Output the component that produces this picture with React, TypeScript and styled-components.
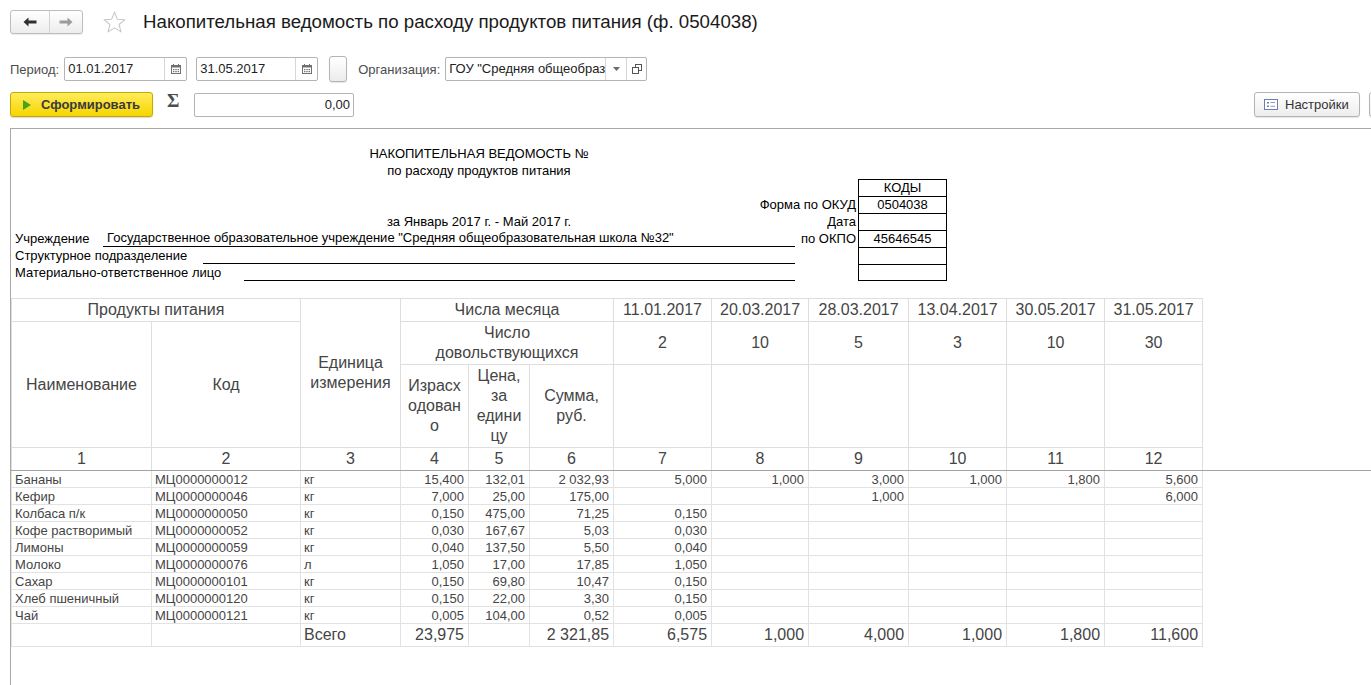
import React from "react";
import styled, { createGlobalStyle } from "styled-components";

const GlobalStyle = createGlobalStyle`
  html, body {
    margin: 0;
    padding: 0;
    background: #fff;
    overflow: hidden;
  }
  body {
    font-family: "Liberation Sans", Arial, sans-serif;
    font-size: 13px;
    color: #333;
  }
  * {
    box-sizing: border-box;
  }
`;

const colWidths = [140, 149, 100, 68, 61, 84, 98, 97, 100, 98, 98, 98];

const dates = ["11.01.2017", "20.03.2017", "28.03.2017", "13.04.2017", "30.05.2017", "31.05.2017"];
const eaters = ["2", "10", "5", "3", "10", "30"];

const rows: string[][] = [
  ["Бананы", "МЦ0000000012", "кг", "15,400", "132,01", "2 032,93", "5,000", "1,000", "3,000", "1,000", "1,800", "5,600"],
  ["Кефир", "МЦ0000000046", "кг", "7,000", "25,00", "175,00", "", "", "1,000", "", "", "6,000"],
  ["Колбаса п/к", "МЦ0000000050", "кг", "0,150", "475,00", "71,25", "0,150", "", "", "", "", ""],
  ["Кофе растворимый", "МЦ0000000052", "кг", "0,030", "167,67", "5,03", "0,030", "", "", "", "", ""],
  ["Лимоны", "МЦ0000000059", "кг", "0,040", "137,50", "5,50", "0,040", "", "", "", "", ""],
  ["Молоко", "МЦ0000000076", "л", "1,050", "17,00", "17,85", "1,050", "", "", "", "", ""],
  ["Сахар", "МЦ0000000101", "кг", "0,150", "69,80", "10,47", "0,150", "", "", "", "", ""],
  ["Хлеб пшеничный", "МЦ0000000120", "кг", "0,150", "22,00", "3,30", "0,150", "", "", "", "", ""],
  ["Чай", "МЦ0000000121", "кг", "0,005", "104,00", "0,52", "0,005", "", "", "", "", ""],
];

const totals = ["", "", "Всего", "23,975", "", "2 321,85", "6,575", "1,000", "4,000", "1,000", "1,800", "11,600"];

/* ---------- icons ---------- */

const ArrowIcon = ({ dir, color }: { dir: "left" | "right"; color: string }) => (
  <svg width="14" height="10" viewBox="0 0 14 10" style={{ transform: dir === "right" ? "scaleX(-1)" : undefined }}>
    <path d="M0.5 5 L5.5 0.5 L5.5 3.6 L13.5 3.6 L13.5 6.4 L5.5 6.4 L5.5 9.5 Z" fill={color} />
  </svg>
);

const StarIcon = () => (
  <svg width="23" height="22" viewBox="0 0 22 21">
    <polygon
      points="11,1 13.7,7.8 21,8.3 15.4,12.9 17.2,20 11,16.1 4.8,20 6.6,12.9 1,8.3 8.3,7.8"
      fill="#fff"
      stroke="#c6c6c6"
      strokeWidth="1"
      strokeLinejoin="round"
    />
  </svg>
);

const CalendarIcon = () => (
  <svg width="10" height="10" viewBox="0 0 10 10">
    <rect x="0.5" y="1.5" width="9" height="8" fill="#fff" stroke="#707070" />
    <rect x="0.5" y="1.5" width="9" height="2" fill="#707070" />
    <rect x="2" y="0" width="1" height="2" fill="#707070" />
    <rect x="7" y="0" width="1" height="2" fill="#707070" />
    <rect x="2" y="5" width="1.4" height="1.2" fill="#707070" />
    <rect x="4.3" y="5" width="1.4" height="1.2" fill="#707070" />
    <rect x="6.6" y="5" width="1.4" height="1.2" fill="#707070" />
    <rect x="2" y="7" width="1.4" height="1.2" fill="#707070" />
    <rect x="4.3" y="7" width="1.4" height="1.2" fill="#707070" />
    <rect x="6.6" y="7" width="1.4" height="1.2" fill="#707070" />
  </svg>
);

const CaretIcon = () => (
  <svg width="7" height="4" viewBox="0 0 7 4">
    <polygon points="0,0 7,0 3.5,4" fill="#6a6a6a" />
  </svg>
);

const OpenIcon = () => (
  <svg width="10" height="10" viewBox="0 0 10 10">
    <rect x="3.5" y="0.5" width="6" height="6" fill="#fff" stroke="#555" />
    <rect x="0.5" y="3.5" width="6" height="6" fill="#fff" stroke="#555" />
  </svg>
);

const PlayIcon = () => (
  <svg width="8" height="10" viewBox="0 0 8 10">
    <polygon points="0,0 8,5 0,10" fill="#47a31a" />
  </svg>
);

const SettingsIcon = () => (
  <svg width="14" height="11" viewBox="0 0 14 11">
    <rect x="0.5" y="0.5" width="13" height="10" fill="#fff" stroke="#6f7cae" />
    <rect x="3" y="3" width="2" height="1.5" fill="#6f7cae" />
    <rect x="3" y="6.5" width="2" height="1.5" fill="#6f7cae" />
    <rect x="6.5" y="3" width="4.5" height="1" fill="#8f98bf" />
    <rect x="6.5" y="6.8" width="4.5" height="1" fill="#8f98bf" />
  </svg>
);

/* ---------- toolbar ---------- */

const Page = styled.div`
  width: 1371px;
  height: 685px;
  overflow: hidden;
  padding: 10px 0 0 10px;
`;

const TitleBar = styled.div`
  display: flex;
  align-items: center;
  height: 24px;
`;

const NavGroup = styled.div`
  display: flex;
  width: 73px;
  height: 24px;
  border: 1px solid #bdbdbd;
  border-radius: 3px;
  background: linear-gradient(#ffffff, #ededed);
  box-shadow: 0 1px 1px rgba(0, 0, 0, 0.08);
`;

const NavButton = styled.div<{ $w: number }>`
  width: ${({ $w }) => $w}px;
  display: flex;
  align-items: center;
  justify-content: center;
  & + & {
    border-left: 1px solid #d2d2d2;
  }
`;

const StarBox = styled.div`
  margin-left: 20px;
  display: flex;
  align-items: center;
`;

const Title = styled.h1`
  margin: 0 0 0 17px;
  font-size: 18.7px;
  font-weight: normal;
  color: #1a1a1a;
  white-space: nowrap;
`;

const FilterRow = styled.div`
  display: flex;
  align-items: center;
  height: 24px;
  margin-top: 23px;
`;

const FieldLabel = styled.span<{ $ml?: number }>`
  margin-left: ${({ $ml }) => $ml ?? 0}px;
  margin-right: 5px;
  color: #4d4d4d;
  white-space: nowrap;
`;

const InputBox = styled.div<{ $w: number; $ml?: number }>`
  display: flex;
  width: ${({ $w }) => $w}px;
  height: 24px;
  margin-left: ${({ $ml }) => $ml ?? 0}px;
  border: 1px solid #b4b4b4;
  border-radius: 2px;
  background: #fff;
  overflow: hidden;
`;

const InputText = styled.div<{ $right?: boolean }>`
  flex: 1;
  min-width: 0;
  padding: 0 3px;
  line-height: 22px;
  color: #222;
  white-space: nowrap;
  overflow: hidden;
  text-align: ${({ $right }) => ($right ? "right" : "left")};
`;

const InputButton = styled.div<{ $w: number }>`
  width: ${({ $w }) => $w}px;
  flex: none;
  display: flex;
  align-items: center;
  justify-content: center;
  border-left: 1px solid #d6d6d6;
`;

const SmallButton = styled.div`
  width: 18px;
  height: 26px;
  margin-left: 11px;
  border: 1px solid #b4b4b4;
  border-radius: 3px;
  background: linear-gradient(#ffffff, #ececec);
  box-shadow: 0 1px 1px rgba(0, 0, 0, 0.1);
`;

const ActionRow = styled.div`
  display: flex;
  align-items: center;
  height: 25px;
  margin-top: 11px;
`;

const GenerateButton = styled.div`
  display: flex;
  align-items: center;
  width: 143px;
  height: 25px;
  padding-left: 12px;
  gap: 10px;
  border: 1px solid #c6a800;
  border-radius: 3px;
  background: linear-gradient(#ffec5c, #f6d500);
  box-shadow: 0 1px 1px rgba(0, 0, 0, 0.15);
  font-weight: bold;
  color: #3a3a3a;
`;

const Sigma = styled.span`
  margin-left: 14px;
  width: 13px;
  font-family: "Liberation Serif", "Times New Roman", serif;
  font-size: 19px;
  font-weight: bold;
  line-height: 16px;
  color: #4d4d4d;
  margin-top: -7px;
`;

const ToolButton = styled.div<{ $w: number; $ml?: string }>`
  display: flex;
  align-items: center;
  width: ${({ $w }) => $w}px;
  height: 25px;
  margin-left: ${({ $ml }) => $ml ?? "0"};
  padding-left: 9px;
  gap: 7px;
  flex: none;
  border: 1px solid #b4b4b4;
  border-radius: 3px;
  background: linear-gradient(#ffffff, #ededed);
  box-shadow: 0 1px 1px rgba(0, 0, 0, 0.1);
  color: #333;
`;

const OverflowButton = styled(ToolButton)`
  margin-right: -28px;
`;

/* ---------- report ---------- */

const ReportPanel = styled.div`
  margin-top: 11px;
  height: 557px;
  border-top: 1px solid #a9a9a9;
  border-left: 1px solid #a9a9a9;
  background: #fff;
  overflow: hidden;
`;

const FormHeader = styled.div`
  display: grid;
  grid-template-columns: 784px 63px 89px;
  grid-auto-rows: 17px;
  padding-top: 16px;
  color: #000;
  line-height: 17px;
  white-space: nowrap;
`;

const HeadLine = styled.div<{ $row: number }>`
  grid-column: 1 / 4;
  grid-row: ${({ $row }) => $row};
  text-align: center;
`;

const SideLabel = styled.div<{ $row: number; $wide?: boolean }>`
  grid-column: ${({ $wide }) => ($wide ? "1 / 3" : "2")};
  grid-row: ${({ $row }) => $row};
  text-align: right;
  padding-right: 2px;
`;

const CodeCell = styled.div<{ $row: number; $last?: boolean }>`
  grid-column: 3;
  grid-row: ${({ $row }) => $row};
  border: 1px solid #000;
  border-bottom: ${({ $last }) => ($last ? "1px solid #000" : "none")};
  text-align: center;
  line-height: 15px;
`;

const FieldRow = styled.div<{ $row: number }>`
  grid-column: 1;
  grid-row: ${({ $row }) => $row};
  display: flex;
`;

const FormLabel = styled.div<{ $w: number }>`
  width: ${({ $w }) => $w}px;
  padding-left: 4px;
  flex: none;
`;

const FormValue = styled.div`
  flex: 1;
  padding-left: 4px;
  line-height: 16px;
  border-bottom: 1px solid #000;
`;

const Sheet = styled.table`
  margin-top: 17px;
  width: 1360px;
  border-collapse: collapse;
  table-layout: fixed;
  color: #454545;
`;

const Col = styled.col<{ $w?: number }>`
  width: ${({ $w }) => ($w ? `${$w}px` : "auto")};
`;

const HeadRow = styled.tr<{ $h: number }>`
  height: ${({ $h }) => $h}px;
`;

const HeadCell = styled.th<{ $bottom?: boolean }>`
  padding: 0 2px;
  border: 1px solid #dedede;
  border-bottom: 1px solid ${({ $bottom }) => ($bottom ? "#a3a3a3" : "#dedede")};
  font-size: 16px;
  font-weight: normal;
  line-height: 20px;
  text-align: center;
  vertical-align: middle;
  white-space: nowrap;
`;

const FillerHead = styled.th`
  border: none;
  border-bottom: 1px solid #a3a3a3;
`;

const BodyRow = styled.tr<{ $total?: boolean }>`
  height: ${({ $total }) => ($total ? 23 : 17)}px;
`;

const BodyCell = styled.td<{ $num?: boolean; $total?: boolean }>`
  padding: 0 ${({ $num }) => ($num ? "4px" : "3px")} 0 3px;
  border: 1px solid #e2e2e2;
  font-size: ${({ $total }) => ($total ? 16 : 13)}px;
  line-height: ${({ $total }) => ($total ? 20 : 15)}px;
  text-align: ${({ $num }) => ($num ? "right" : "left")};
  white-space: nowrap;
  overflow: hidden;
`;

const FillerCell = styled.td`
  border: none;
`;

const App = () => {
  return (
    <>
      <GlobalStyle />
      <Page>
        <TitleBar>
          <NavGroup>
            <NavButton $w={38}>
              <ArrowIcon dir="left" color="#2f2f2f" />
            </NavButton>
            <NavButton $w={33}>
              <ArrowIcon dir="right" color="#9c9c9c" />
            </NavButton>
          </NavGroup>
          <StarBox>
            <StarIcon />
          </StarBox>
          <Title>Накопительная ведомость по расходу продуктов питания (ф. 0504038)</Title>
        </TitleBar>

        <FilterRow>
          <FieldLabel>Период:</FieldLabel>
          <InputBox $w={123}>
            <InputText>01.01.2017</InputText>
            <InputButton $w={22}>
              <CalendarIcon />
            </InputButton>
          </InputBox>
          <InputBox $w={122} $ml={9}>
            <InputText>31.05.2017</InputText>
            <InputButton $w={22}>
              <CalendarIcon />
            </InputButton>
          </InputBox>
          <SmallButton />
          <FieldLabel $ml={11}>Организация:</FieldLabel>
          <InputBox $w={202}>
            <InputText>ГОУ "Средняя общеобразовательная школа №32"</InputText>
            <InputButton $w={21}>
              <CaretIcon />
            </InputButton>
            <InputButton $w={20}>
              <OpenIcon />
            </InputButton>
          </InputBox>
        </FilterRow>

        <ActionRow>
          <GenerateButton>
            <PlayIcon />
            Сформировать
          </GenerateButton>
          <Sigma>Σ</Sigma>
          <InputBox $w={160} $ml={14}>
            <InputText $right>0,00</InputText>
          </InputBox>
          <ToolButton $w={106} $ml="auto">
            <SettingsIcon />
            Настройки
          </ToolButton>
          <OverflowButton $w={30} $ml="9px" />
        </ActionRow>

        <ReportPanel>
          <FormHeader>
            <HeadLine $row={1}>НАКОПИТЕЛЬНАЯ ВЕДОМОСТЬ №</HeadLine>
            <HeadLine $row={2}>по расходу продуктов питания</HeadLine>

            <CodeCell $row={3}>КОДЫ</CodeCell>
            <SideLabel $row={4} $wide>
              Форма по ОКУД
            </SideLabel>
            <CodeCell $row={4}>0504038</CodeCell>

            <HeadLine $row={5}>за Январь 2017 г. - Май 2017 г.</HeadLine>
            <SideLabel $row={5}>Дата</SideLabel>
            <CodeCell $row={5} />

            <FieldRow $row={6}>
              <FormLabel $w={92}>Учреждение</FormLabel>
              <FormValue>Государственное образовательное учреждение "Средняя общеобразовательная школа №32"</FormValue>
            </FieldRow>
            <SideLabel $row={6}>по ОКПО</SideLabel>
            <CodeCell $row={6}>45646545</CodeCell>

            <FieldRow $row={7}>
              <FormLabel $w={192}>Структурное подразделение</FormLabel>
              <FormValue />
            </FieldRow>
            <CodeCell $row={7} />

            <FieldRow $row={8}>
              <FormLabel $w={233}>Материально-ответственное лицо</FormLabel>
              <FormValue />
            </FieldRow>
            <CodeCell $row={8} $last />
          </FormHeader>

          <Sheet>
            <colgroup>
              {colWidths.map((w, i) => (
                <Col key={i} $w={w} />
              ))}
              <Col />
            </colgroup>
            <thead>
              <HeadRow $h={23}>
                <HeadCell colSpan={2}>Продукты питания</HeadCell>
                <HeadCell rowSpan={3}>
                  Единица
                  <br />
                  измерения
                </HeadCell>
                <HeadCell colSpan={3}>Числа месяца</HeadCell>
                {dates.map((d) => (
                  <HeadCell key={d}>{d}</HeadCell>
                ))}
                <FillerHead rowSpan={4} />
              </HeadRow>
              <HeadRow $h={43}>
                <HeadCell rowSpan={2}>Наименование</HeadCell>
                <HeadCell rowSpan={2}>Код</HeadCell>
                <HeadCell colSpan={3}>
                  Число
                  <br />
                  довольствующихся
                </HeadCell>
                {eaters.map((n, i) => (
                  <HeadCell key={i}>{n}</HeadCell>
                ))}
              </HeadRow>
              <HeadRow $h={83}>
                <HeadCell>
                  Израсх
                  <br />
                  одован
                  <br />о
                </HeadCell>
                <HeadCell>
                  Цена,
                  <br />
                  за
                  <br />
                  едини
                  <br />
                  цу
                </HeadCell>
                <HeadCell>
                  Сумма,
                  <br />
                  руб.
                </HeadCell>
                {dates.map((d) => (
                  <HeadCell key={d} />
                ))}
              </HeadRow>
              <HeadRow $h={23}>
                {colWidths.map((_, i) => (
                  <HeadCell key={i} $bottom>
                    {i + 1}
                  </HeadCell>
                ))}
              </HeadRow>
            </thead>
            <tbody>
              {rows.map((r) => (
                <BodyRow key={r[1]}>
                  {r.map((v, i) => (
                    <BodyCell key={i} $num={i > 2}>
                      {v}
                    </BodyCell>
                  ))}
                  <FillerCell />
                </BodyRow>
              ))}
              <BodyRow $total>
                {totals.map((v, i) => (
                  <BodyCell key={i} $num={i > 2} $total>
                    {v}
                  </BodyCell>
                ))}
                <FillerCell />
              </BodyRow>
            </tbody>
          </Sheet>
        </ReportPanel>
      </Page>
    </>
  );
};

export default App;
